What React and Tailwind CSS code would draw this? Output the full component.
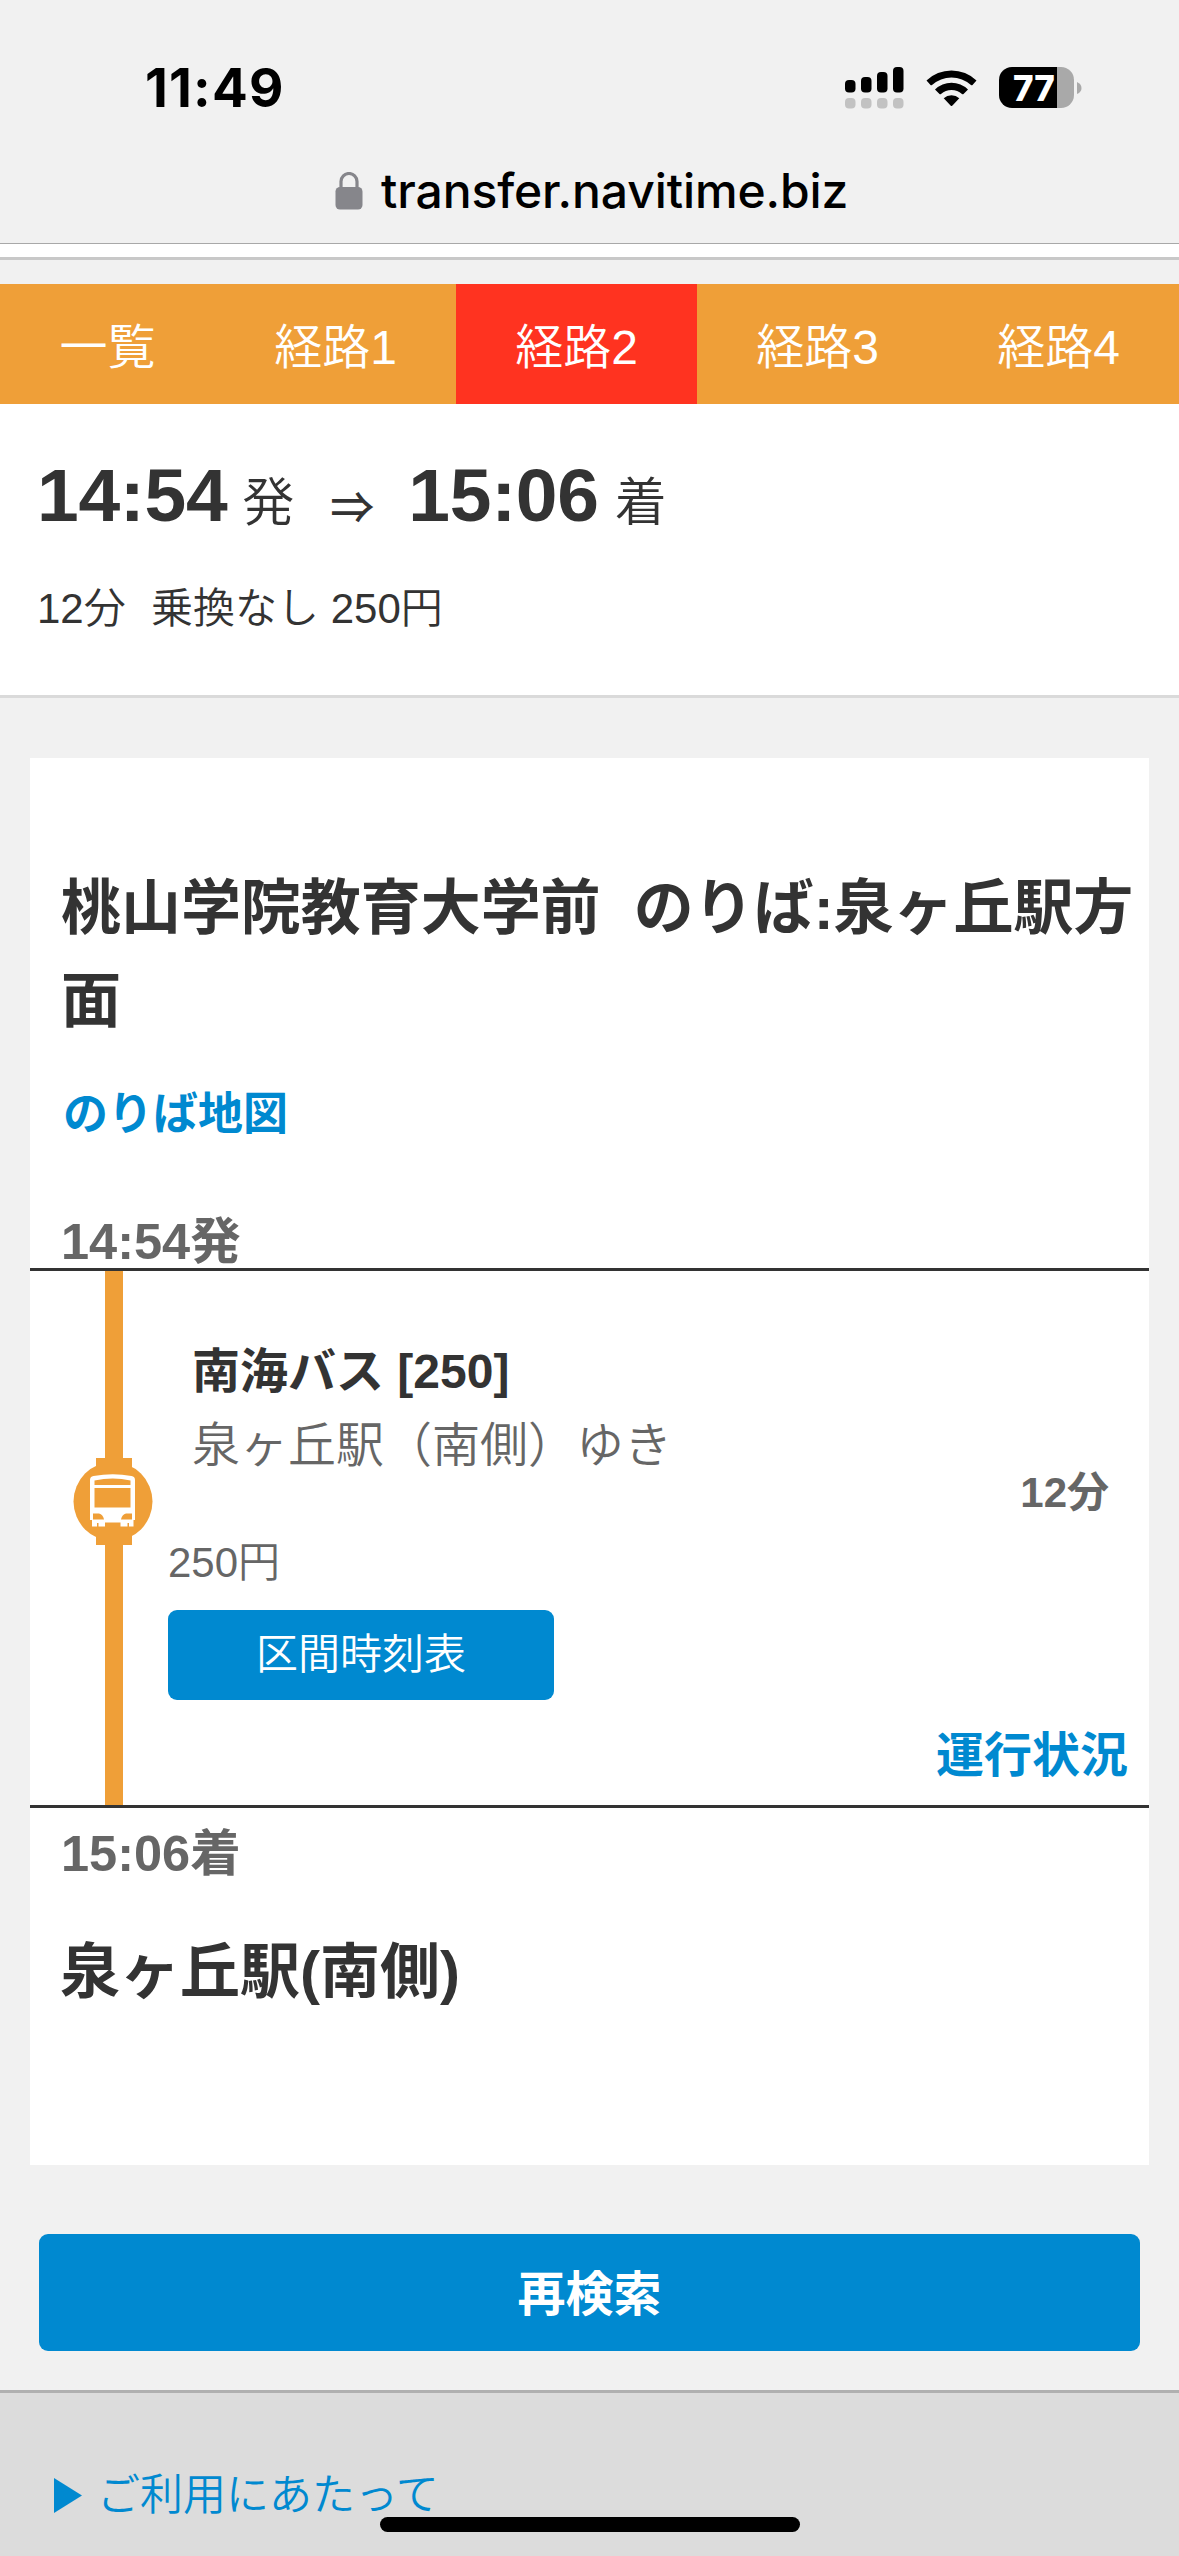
import React from "react";

const tabs = [
  { label: "一覧", width: "w-[215px]" },
  { label: "経路1", width: "w-[241px]" },
  { label: "経路2", width: "w-[241px]", active: true },
  { label: "経路3", width: "w-[241px]" },
  { label: "経路4", width: "w-[241px]" },
];

const StatusBar = () => {
  return (
    <div className="flex h-[140px] items-center justify-between pt-[35px] pr-[97px] pl-[145px] font-[Inter,sans-serif] text-black">
      <div className="text-[53px] leading-[60px] font-bold tracking-[1.2px]">11:49</div>
      <div className="flex items-center">
        <svg className="mr-[22px] h-[42px] w-[59px]" viewBox="0 0 59 42">
          <rect x="0" y="13" width="10.5" height="12.5" rx="4" />
          <rect x="16" y="10" width="10.5" height="15.5" rx="4" />
          <rect x="32" y="5" width="10.5" height="20.5" rx="4" />
          <rect x="48" y="0" width="10.5" height="25.5" rx="4" />
          <g fill="#c2c2c2">
            <rect x="0" y="31" width="10.5" height="10.5" rx="4" />
            <rect x="16" y="31" width="10.5" height="10.5" rx="4" />
            <rect x="32" y="31" width="10.5" height="10.5" rx="4" />
            <rect x="48" y="31" width="10.5" height="10.5" rx="4" />
          </g>
        </svg>
        <svg className="mr-[22px] h-[38px] w-[51px]" viewBox="0 0 51 38">
          <path d="M0.5 11.5 A36 36 0 0 1 50.5 11.5 L46.5 16 Q45.8 16.6 45 16 A29 29 0 0 0 6 16 Q5.2 16.6 4.5 16 Z" />
          <path d="M9 20.5 A23.5 23.5 0 0 1 42 20.5 L37.5 25 Q36.8 25.6 36 25 A16 16 0 0 0 15 25 Q14.2 25.6 13.5 25 Z" />
          <path d="M17.7 29.2 A12 12 0 0 1 33.3 29.2 L26.2 36.7 Q25.5 37.3 24.8 36.7 Z" />
        </svg>
        <div className="flex h-[41px] w-[75px] items-center rounded-[13px] bg-[linear-gradient(to_right,#000_58px,#a9a9a9_58px)] pl-[14px] text-[35px] leading-[44px] font-extrabold text-white">
          77
        </div>
        <svg className="ml-[3px] h-[12px] w-[5px]" viewBox="0 0 5 12">
          <path d="M0 0 Q4.5 2 4.5 6 Q4.5 10 0 12 Z" fill="#a9a9a9" />
        </svg>
      </div>
    </div>
  );
};

const AddressBar = () => {
  return (
    <div className="flex h-[103px] items-start pt-[20px] pl-[335px]">
      <svg className="mt-[12px] h-[38px] w-[28px]" viewBox="0 0 28 38" fill="#86868b">
        <rect x="0.5" y="15" width="27" height="22.5" rx="4.5" />
        <path d="M6 17 V9.5 a8 8 0 0 1 16 0 V17" fill="none" stroke="#86868b" strokeWidth="3.2" />
      </svg>
      <div className="ml-[18px] font-[Inter,sans-serif] text-[48px] leading-[62px] font-medium tracking-[-0.1px] text-black">
        transfer.navitime.biz
      </div>
    </div>
  );
};

const BusIcon = () => {
  return (
    <svg className="absolute top-[187px] left-[43px] h-[87px] w-[80px]" viewBox="0 0 80 87">
      <g fill="#ef9f38">
        <circle cx="40" cy="43.5" r="39.5" />
        <rect x="23" y="0" width="36" height="87" />
      </g>
      <path
        fill="#fff"
        d="M17 22 Q17 18.5 20.5 18 Q40 14.5 58.5 18 Q62 18.5 62 22 V62 H60.5 V68.5 H56 V65 H54.5 V68.5 H47.5 V64.5 H32 V68.5 H25.5 V65 H24 V68.5 H19 V62 H17 Z"
      />
      <g fill="#ef9f38">
        <path d="M21.5 22.5 Q40 18.5 57.5 22.5 V27 H21.5 Z" />
        <rect x="21.5" y="30" width="36" height="19.5" />
        <path d="M20 55.5 H26 Q30 56.5 31 61.5 H20 Z" />
        <path d="M59 55.5 H53 Q49 56.5 48 61.5 H59 Z" />
      </g>
    </svg>
  );
};

const App = () => {
  return (
    <div className="relative flex h-[2556px] w-[1179px] flex-col overflow-hidden bg-[#f1f1f1] font-['Liberation_Sans','Noto_Sans_CJK_JP',sans-serif] text-[#333]">
      <StatusBar />
      <AddressBar />
      <div className="h-[17px] border-t border-b-[3px] border-t-[#a8a8a8] border-b-[#c8c8c8] bg-white" />

      <div className="mt-6 flex h-[120px] bg-[#ef9f38] text-[48px] leading-[127px] font-[350] text-white">
        {tabs.map((tab) => (
          <div
            key={tab.label}
            className={`${tab.width} text-center ${tab.active ? "bg-[#ff3320]" : ""}`}
          >
            {tab.label}
          </div>
        ))}
      </div>

      <div className="h-[294px] border-b-[3px] border-[#dadada] bg-white pt-[46px] pl-[37px]">
        <div className="flex h-[90px] items-baseline text-[52px] leading-[90px] font-[350]">
          <span className="text-[75px] font-bold tracking-[-0.3px]">14:54</span>
          <span className="ml-[15px]">発</span>
          <span className="ml-[36px] w-[78px] text-[44px] font-medium">
            <span className="relative top-[3px]">⇒</span>
          </span>
          <span className="text-[75px] font-bold tracking-[-0.3px]">15:06</span>
          <span className="ml-[16px]">着</span>
        </div>
        <div className="mt-9 h-16 text-[42px] leading-[66px] font-[350]">
          12分&nbsp; <span className="ml-[2px]">乗換なし 250円</span>
        </div>
      </div>

      <div className="mx-[30px] mt-[60px] flex h-[1407px] flex-col bg-white">
        <h1 className="mt-[104px] h-[187px] pl-[31px] text-[60px] leading-[93px] font-bold tracking-[-0.05px]">
          桃山学院教育大学前&nbsp; のりば:泉ヶ丘駅方面
        </h1>
        <a className="mt-9 h-[60px] pl-[33px] text-[45px] leading-[60px] font-bold text-[#0089d0]">
          のりば地図
        </a>
        <div className="mt-[71px] h-[52px] pl-[31px] text-[50.5px] leading-[52px] font-bold text-[#666]">
          14:54発
        </div>

        <div className="relative flex h-[540px] border-y-[3px] border-[#333]">
          <div className="w-[138px] pl-[75px]">
            <div className="h-full w-[18px] bg-[#ef9f38]" />
          </div>
          <BusIcon />
          <div className="flex-1 pt-[64px]">
            <div className="pl-6 text-[48px] leading-[74px] font-bold">南海バス [250]</div>
            <div className="pl-6 text-[48px] leading-[74px] font-[350] text-[#666]">
              泉ヶ丘駅（南側）ゆき
            </div>
            <div className="mt-[50px] text-[42px] leading-[60px] font-[350] text-[#666]">250円</div>
            <button className="mt-[17px] block h-[90px] w-[386px] rounded-[9px] bg-[#0089d0] text-[42px] leading-[90px] font-[350] text-white">
              区間時刻表
            </button>
          </div>
          <div className="flex w-[240px] flex-col items-end pr-[21px] font-bold">
            <div className="mt-[192px] mr-[19px] text-[42px] leading-[60px] text-[#666]">12分</div>
            <a className="mt-[203px] text-[48px] leading-[60px] text-[#0089d0]">運行状況</a>
          </div>
        </div>

        <div className="mt-4 pl-[31px] text-[50.5px] leading-[60px] font-bold text-[#666]">15:06着</div>
        <h2 className="mt-[42px] pl-[30px] text-[60px] leading-[94px] font-bold">泉ヶ丘駅(南側)</h2>
      </div>

      <button className="mx-[39px] mt-[69px] h-[117px] rounded-[9px] bg-[#0089d0] text-[48px] leading-[117px] font-bold text-white">
        <span className="relative top-[2px]">再検索</span>
      </button>

      <div className="mt-[39px] flex flex-1 items-start border-t-[3px] border-[#b0b0b0] bg-[#dcdcdc] pl-[54px] text-[#0089d0]">
        <svg className="mt-[85px] h-[35px] w-[28px]" viewBox="0 0 28 35">
          <path d="M0 0 L28 17.5 L0 35 Z" fill="#0089d0" />
        </svg>
        <a className="mt-[72px] ml-[15px] text-[43px] leading-[60px] font-[350]">ご利用にあたって</a>
      </div>

      {/* home indicator */}
      <div className="absolute bottom-6 left-[380px] h-[15px] w-[420px] rounded-full bg-black" />
    </div>
  );
};

export default App;
